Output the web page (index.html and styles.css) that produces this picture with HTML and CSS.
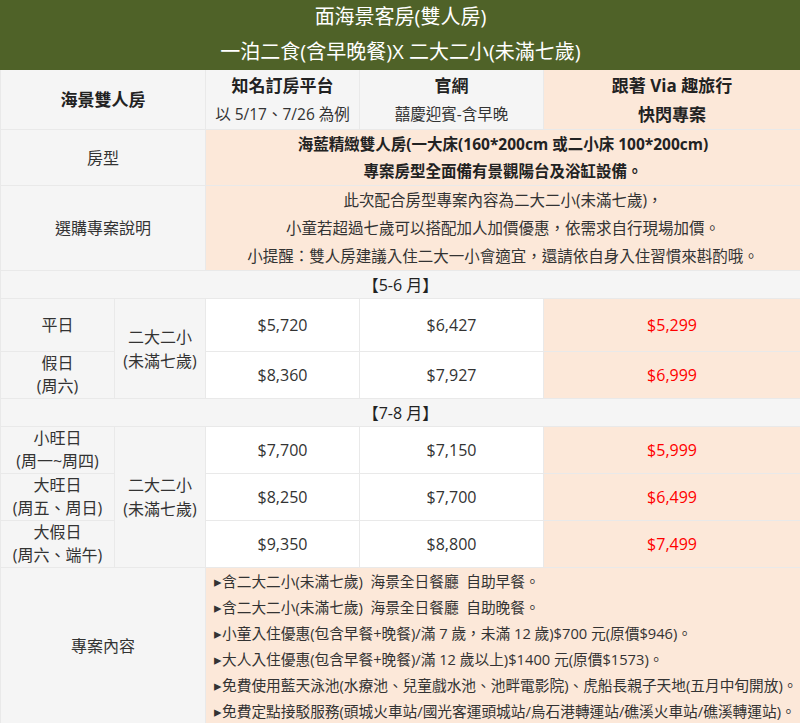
FILE: index.html
```html
<!DOCTYPE html>
<html lang="zh-Hant">
<head>
<meta charset="utf-8">
<title>面海景客房(雙人房)</title>
<link rel="stylesheet" href="styles.css">
</head>
<body>
<table class="plan">
  <colgroup>
    <col class="c1"><col class="c2"><col class="c3"><col class="c4"><col class="c5">
  </colgroup>
  <tr class="r-title1"><td colspan="5" class="title">面海景客房(雙人房)</td></tr>
  <tr class="r-title2"><td colspan="5" class="title">一泊二食(含早晚餐)X 二大二小(未滿七歲)</td></tr>
  <tr class="r-head">
    <td colspan="2" class="grey bold big">海景雙人房</td>
    <td class="grey"><div class="line bold big">知名訂房平台</div><div class="line">以 5/17、7/26 為例</div></td>
    <td class="grey"><div class="line bold big">官網</div><div class="line">囍慶迎賓-含早晚</div></td>
    <td class="peach bold big"><div class="line">跟著 Via 趣旅行</div><div class="line">快閃專案</div></td>
  </tr>
  <tr class="r-type">
    <td colspan="2" class="grey">房型</td>
    <td colspan="3" class="peach bold mid"><div class="l27">海藍精緻雙人房(一大床(160*200cm 或二小床 100*200cm)</div><div class="l27">專案房型全面備有景觀陽台及浴缸設備。</div></td>
  </tr>
  <tr class="r-desc">
    <td colspan="2" class="grey">選購專案說明</td>
    <td colspan="3" class="peach mid"><div class="l28">此次配合房型專案內容為二大二小(未滿七歲)，</div><div class="l28">小童若超過七歲可以搭配加人加價優惠，依需求自行現場加價。</div><div class="l28">小提醒：雙人房建議入住二大一小會適宜，還請依自身入住習慣來斟酌哦。</div></td>
  </tr>
  <tr class="r-period"><td colspan="5" class="grey dark">【5-6 月】</td></tr>
  <tr class="r-p1">
    <td class="grey">平日</td>
    <td rowspan="2" class="grey"><div class="l24">二大二小</div><div class="l24">(未滿七歲)</div></td>
    <td class="white">$5,720</td>
    <td class="white">$6,427</td>
    <td class="peach red">$5,299</td>
  </tr>
  <tr class="r-p2">
    <td class="grey"><div class="l23">假日</div><div class="l23">(周六)</div></td>
    <td class="white">$8,360</td>
    <td class="white">$7,927</td>
    <td class="peach red">$6,999</td>
  </tr>
  <tr class="r-period"><td colspan="5" class="grey dark">【7-8 月】</td></tr>
  <tr class="r-p3">
    <td class="grey"><div class="l23">小旺日</div><div class="l23">(周一~周四)</div></td>
    <td rowspan="3" class="grey"><div class="l24">二大二小</div><div class="l24">(未滿七歲)</div></td>
    <td class="white">$7,700</td>
    <td class="white">$7,150</td>
    <td class="peach red">$5,999</td>
  </tr>
  <tr class="r-p3">
    <td class="grey"><div class="l23">大旺日</div><div class="l23">(周五、周日)</div></td>
    <td class="white">$8,250</td>
    <td class="white">$7,700</td>
    <td class="peach red">$6,499</td>
  </tr>
  <tr class="r-p3">
    <td class="grey"><div class="l23">大假日</div><div class="l23">(周六、端午)</div></td>
    <td class="white">$9,350</td>
    <td class="white">$8,800</td>
    <td class="peach red">$7,499</td>
  </tr>
  <tr class="r-content">
    <td colspan="2" class="grey">專案內容</td>
    <td colspan="3" class="peach list">
      <div class="item">▸含二大二小(未滿七歲)&nbsp; 海景全日餐廳&nbsp; 自助早餐。</div>
      <div class="item">▸含二大二小(未滿七歲)&nbsp; 海景全日餐廳&nbsp; 自助晚餐。</div>
      <div class="item">▸小童入住優惠(包含早餐+晚餐)/滿 7 歲，未滿 12 歲)$700 元(原價$946)。</div>
      <div class="item">▸大人入住優惠(包含早餐+晚餐)/滿 12 歲以上)$1400 元(原價$1573)。</div>
      <div class="item">▸免費使用藍天泳池(水療池、兒童戲水池、池畔電影院)、虎船長親子天地(五月中旬開放)。</div>
      <div class="item">▸免費定點接駁服務(頭城火車站/國光客運頭城站/烏石港轉運站/礁溪火車站/礁溪轉運站)。</div>
    </td>
  </tr>
</table>
</body>
</html>
```

FILE: styles.css
```css
html, body {
  margin: 0;
  padding: 0;
  background: #ffffff;
}
body {
  font-family: "Segoe UI", "Open Sans", "Noto Sans CJK TC", sans-serif;
  font-size: 16px;
  color: #333333;
}
.plan {
  width: 800px;
  border-collapse: collapse;
  table-layout: fixed;
}
.c1 { width: 114px; }
.c2 { width: 91px; }
.c3 { width: 154px; }
.c4 { width: 184px; }
.c5 { width: 257px; }
.plan td {
  border: 1px solid #e9e9e9;
  padding: 0;
  text-align: center;
  vertical-align: middle;
  line-height: 20px;
}
.plan td.title {
  background: #4f6228;
  color: #ffffff;
  font-size: 20px;
  border-color: #4f6228;
}
.r-title1 { height: 34px; }
.r-title2 { height: 35px; }
.r-title1 td { padding-bottom: 2px; }
.r-head { height: 60px; }
.r-type { height: 56px; }
.r-desc { height: 83px; }
.r-period { height: 28px; }
.r-p1 { height: 53px; }
.r-p2 { height: 47px; }
.r-p3 { height: 47px; }
.r-content { height: 157px; }
.grey { background: #f5f5f5; }
.white { background: #ffffff; }
.peach { background: #fce8d9; }
.bold { font-weight: 700; color: #222222; }
.big { font-size: 17px; }
.mid { font-size: 15.5px; }
.dark { color: #222222; }
.red { color: #ff0000; }
.line { line-height: 29px; }
.line:not(.big) { font-size: 15.5px; }
.big .line { font-size: 17px; }
.l27 { line-height: 27px; }
.l28 { line-height: 28px; }
.l24 { line-height: 24px; }
.l23 { line-height: 23px; }
.plan td.list {
  text-align: left;
  padding-left: 8px;
  font-size: 14.7px;
}
.item { line-height: 26px; white-space: nowrap; }
```
